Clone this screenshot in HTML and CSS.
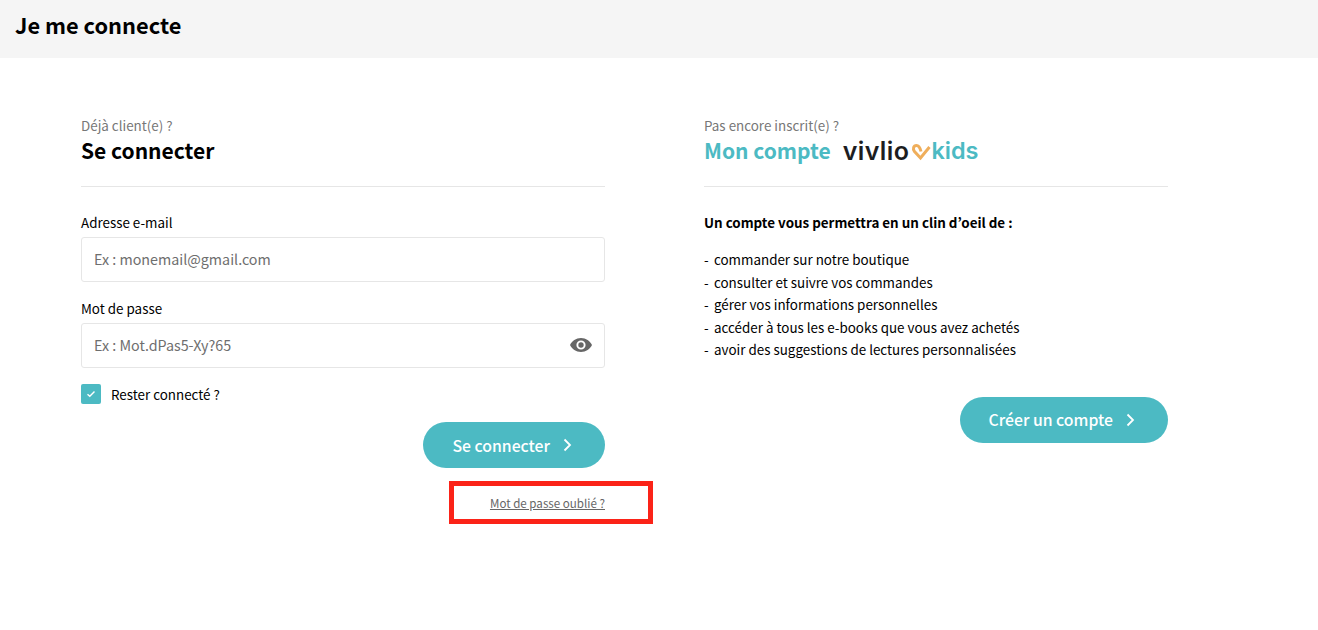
FILE: index.html
```html
<!DOCTYPE html>
<html lang="fr">
<head>
    <meta charset="UTF-8">
    <meta name="viewport" content="width=device-width, initial-scale=1.0">
    <title>Je me connecte</title>
    <link rel="stylesheet" href="styles.css">
</head>
<body>
    <div class="topbar">
        <h1>Je me connecte</h1>
    </div>
    <div class="columns">
        <div class="col col-login">
            <div class="col-head">
                <div class="overline">Déjà client(e) ?</div>
                <h2>Se connecter</h2>
            </div>
            <form class="login-form">
                <label class="field-label" for="email">Adresse e-mail</label>
                <input class="field" type="text" id="email" placeholder="Ex : monemail@gmail.com">
                <label class="field-label" for="password">Mot de passe</label>
                <div class="field-wrap">
                    <input class="field" type="text" id="password" placeholder="Ex : Mot.dPas5-Xy?65">
                    <svg class="eye" width="22" height="14" viewBox="0 0 22 14">
                        <path fill="#666666" fill-rule="evenodd" d="M11 0C6 0 2 3 0 7c2 4 6 7 11 7s9-3 11-7c-2-4-6-7-11-7zm0 11.6A4.6 4.6 0 1 1 11 2.400a4.600 4.600 0 0 1 0 9.200z"/>
                        <circle fill="#666666" cx="11" cy="7" r="2.700"/>
                    </svg>
                </div>
                <div class="remember">
                    <span class="check">
                        <svg width="10" height="8" viewBox="0 0 10 8"><path d="M1.500 4.200 3.800 6.300 8.500 1.500" fill="none" stroke="#ffffff" stroke-width="1.400"/></svg>
                    </span>
                    <span>Rester connecté ?</span>
                </div>
                <div class="actions">
                    <button class="btn" type="button">Se connecter
                        <svg width="9" height="14" viewBox="0 0 9 14"><path d="M1.500 1.500 7 7l-5.500 5.500" fill="none" stroke="#ffffff" stroke-width="1.800"/></svg>
                    </button>
                    <div class="forgot-box">
                        <a class="forgot" href="#">Mot de passe oublié ?</a>
                    </div>
                </div>
            </form>
        </div>
        <div class="col col-signup">
            <div class="col-head">
                <div class="overline">Pas encore inscrit(e) ?</div>
                <h2 class="teal-title">Mon compte
                    <span class="logo"><span class="logo-name">vivlio</span><svg class="logo-heart" width="24" height="18" viewBox="0 0 24 18"><path d="M12 8.500C11 4.500 9.500 2.500 7.500 2.500 4.500 2.500 3.500 6 5.500 8.500L11.500 15 20.500 4" fill="none" stroke="#efae5b" stroke-width="3"/></svg><span class="logo-kids">kids</span></span>
                </h2>
            </div>
            <p class="lead">Un compte vous permettra en un clin d’oeil de :</p>
            <ul class="perks">
                <li>commander sur notre boutique</li>
                <li>consulter et suivre vos commandes</li>
                <li>gérer vos informations personnelles</li>
                <li>accéder à tous les e-books que vous avez achetés</li>
                <li>avoir des suggestions de lectures personnalisées</li>
            </ul>
            <div class="actions">
                <button class="btn" type="button">Créer un compte
                    <svg width="9" height="14" viewBox="0 0 9 14"><path d="M1.500 1.500 7 7l-5.500 5.500" fill="none" stroke="#ffffff" stroke-width="1.800"/></svg>
                </button>
            </div>
        </div>
    </div>
</body>
</html>
```
FILE: styles.css
```css
body {
    font-family: "Noto Sans CJK JP", "Open Sans", sans-serif;
    margin: 0;
    padding: 0;
    background-color: #ffffff;
    color: #000000;
    font-size: 13.400px;
    line-height: 20px;
}
.topbar {
    height: 58px;
    padding-left: 15px;
    background-color: #f5f5f5;
    display: flex;
    align-items: center;
}
.topbar h1 {
    margin: 0 0 8px;
    font-size: 21.800px;
    line-height: 30px;
    font-weight: 700;
}
.columns {
    display: flex;
    padding: 57px 0 0 81px;
}
.col-login {
    width: 524px;
    margin-right: 99px;
}
.col-signup {
    width: 464px;
}
.col-head {
    height: 71px;
    border-bottom: 1px solid #e6e6e6;
}
.overline {
    color: #777777;
    line-height: 20px;
}
.col-head h2 {
    margin: 0;
    font-size: 21px;
    line-height: 30px;
    font-weight: 700;
}
.teal-title {
    color: #4cbac3;
    display: flex;
    align-items: center;
}
.logo {
    display: flex;
    align-items: center;
    margin: 2px 0 0 12px;
    font-family: "Inter", sans-serif;
    font-size: 25px;
    line-height: 24px;
    font-weight: 600;
    color: #1d1d1f;
}
.logo-name {
    letter-spacing: 0.400px;
}
.logo-heart {
    margin: 1px -2px 0 0;
}
.logo-kids {
    color: #4cbac3;
    font-size: 23.500px;
}
.login-form {
    display: flex;
    flex-direction: column;
    padding-top: 25px;
}
.field-label {
    line-height: 20px;
    margin-bottom: 5px;
}
.field-wrap {
    position: relative;
}
.field {
    box-sizing: border-box;
    width: 100%;
    height: 45px;
    padding: 0 12px 2px;
    margin-bottom: 16px;
    border: 1px solid #e6e6e6;
    border-radius: 3px;
    outline: none;
    font-family: inherit;
    font-size: 14.300px;
    color: #000000;
    display: block;
}
.field::placeholder {
    color: #6e6e6e;
    opacity: 1;
}
.eye {
    position: absolute;
    right: 13px;
    top: 15px;
}
.remember {
    display: flex;
    align-items: center;
    gap: 10px;
    height: 20px;
}
.check {
    width: 20px;
    height: 20px;
    border-radius: 2px;
    background-color: #4cbac3;
    display: flex;
    align-items: center;
    justify-content: center;
}
.actions {
    display: flex;
    flex-direction: column;
    align-items: flex-end;
}
.login-form .actions {
    margin-top: 18px;
}
.btn {
    height: 46px;
    padding: 0 33px 0 29px;
    border: none;
    border-radius: 23px;
    background-color: #4cbac3;
    color: #ffffff;
    font-family: inherit;
    font-size: 15.800px;
    font-weight: 500;
    display: flex;
    align-items: center;
    gap: 13px;
}
.forgot-box {
    box-sizing: border-box;
    flex: none;
    width: 204px;
    height: 43px;
    margin: 13px -48px 0 0;
    padding-right: 43px;
    border: 5px solid #fb2318;
    display: flex;
    align-items: center;
    justify-content: flex-end;
}
.forgot {
    font-size: 11.600px;
    line-height: 18px;
    color: #666666;
}
.lead {
    margin: 25px 0 16px;
    font-weight: 700;
    line-height: 20px;
}
.perks {
    list-style: none;
    margin: 0 0 36px;
    padding: 0;
}
.perks li {
    line-height: 22.500px;
    padding-left: 10px;
    position: relative;
}
.perks li::before {
    content: "-";
    position: absolute;
    left: 0;
}
```
